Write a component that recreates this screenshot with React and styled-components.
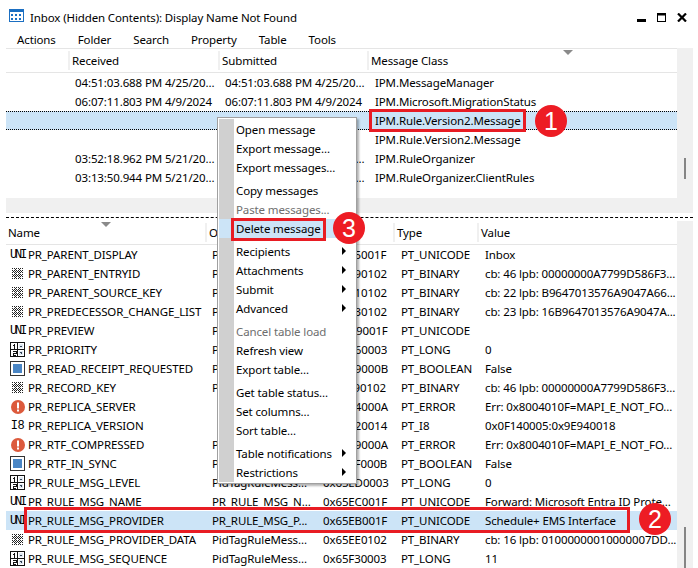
import styled, { createGlobalStyle } from "styled-components"

const GlobalStyle = createGlobalStyle`
  html, body { margin: 0; padding: 0; background: #fff; }
  body { font-family: "Noto Sans", "Open Sans", "Liberation Sans", sans-serif; font-size: 11.5px; letter-spacing: -0.12px; color: #000; }
`
const Window = styled.div`
  position: relative;
  width: 698px;
  height: 568px;
  overflow: hidden;
  background: #fff;
`
const TitleBar = styled.div`
  height: 30px;
  display: flex;
  align-items: center;
  padding: 0 11px 0 9px;
  gap: 6px;
`
const TitleText = styled.div`
  flex: 1;
  padding-top: 5px;
`
const WinButtons = styled.div`
  display: flex;
  gap: 11px;
  align-items: center;
  padding-top: 4px;
`
const MenuBar = styled.div`
  height: 18px;
  display: flex;
  align-items: center;
  padding-left: 17px;
  gap: 22px;
`
const Pane = styled.div`
  display: flex;
  margin: 0 5px 0 6px;
  height: ${p => p.$h}px;
`
const ListArea = styled.div`
  width: 671px;
  flex: none;
  overflow: hidden;
`
const ScrollTrack = styled.div`
  width: 16px;
  background: #f0f0f0;
  position: relative;
`
const ScrollThumb = styled.div`
  position: absolute;
  left: 7px;
  width: 2px;
  top: ${p => p.$top}px;
  height: ${p => p.$h}px;
  background: #858585;
`
const HeaderRow = styled.div`
  position: relative;
  display: grid;
  grid-template-columns: ${p => p.$cols};
  height: 23px;
  border-bottom: 1px solid #e5e5e5;
  border-top: ${p => (p.$top ? "1px solid #e5e5e5" : "none")};
`
const HeaderCell = styled.div`
  display: flex;
  align-items: center;
  white-space: nowrap;
  overflow: hidden;
  margin: 2px 0;
  padding-left: 2px;
  border-left: ${p => (p.$first ? "none" : "2px solid #f0f0f0")};
`
const SortCaret = styled.div`
  position: absolute;
  top: 1px;
  left: ${p => p.$left}px;
  width: 0;
  height: 0;
  border-left: 5px solid transparent;
  border-right: 5px solid transparent;
  border-top: 5px solid #8a8a8a;
`
const Row = styled.div`
  display: grid;
  grid-template-columns: ${p => p.$cols};
  height: 19px;
  align-items: center;
  box-sizing: border-box;
  background: ${p => (p.$sel ? "#cce4f7" : "transparent")};
  border-top: ${p => (p.$dotted ? "1px dotted #000" : "none")};
  border-bottom: ${p => (p.$dotted ? "1px dotted #000" : "none")};
`
const Cell = styled.div`
  white-space: nowrap;
  overflow: hidden;
  padding-left: ${p => p.$pad ?? 7}px;
  min-width: 0;
`
const NameCell = styled.div`
  display: flex;
  align-items: center;
  white-space: nowrap;
  overflow: hidden;
  padding-left: 4px;
  gap: 3px;
`
const IconBox = styled.span`
  width: 15px;
  height: 15px;
  flex: none;
  display: flex;
  align-items: center;
  justify-content: center;
`
const TypeGlyph = styled.span`
  font-family: "Liberation Mono", monospace;
  font-size: 12px;
  letter-spacing: ${p => (p.$tight ? "-2.2px" : "-0.4px")};
  line-height: 1;
`
const Splitter = styled.div`
  height: 15px;
  margin: 0 5px 0 6px;
  background: #f0f0f0;
`
const DashLine = styled.div`
  height: 8px;
  margin: 0 5px 0 6px;
  box-sizing: border-box;
  padding-top: 4px;
  &::before {
    content: "";
    display: block;
    border-top: 1px dashed #000;
  }
`
const ContextMenu = styled.div`
  position: absolute;
  left: 217px;
  top: 117px;
  width: 140px;
  height: 367px;
  box-sizing: border-box;
  background: #fff;
  border: 1px solid #a0a0a0;
  box-shadow: 2px 2px 2px rgba(0, 0, 0, 0.3);
  padding: 2px 1px;
  &::before {
    content: "";
    position: absolute;
    left: 1px;
    top: 1px;
    bottom: 1px;
    width: 15px;
    background: #d0d0d0;
  }
`
const MenuItem = styled.div`
  position: relative;
  height: 19px;
  display: flex;
  align-items: center;
  padding-left: 17px;
  color: ${p => (p.$off ? "#6d6d6d" : "#000")};
  background: ${p => (p.$hot ? "#cce4f7" : "transparent")};
  margin-top: ${p => (p.$gap ? 4 : 0)}px;
`
const SubArrow = styled.span`
  position: absolute;
  right: 9px;
  top: 5px;
  width: 0;
  height: 0;
  border-top: 4px solid transparent;
  border-bottom: 4px solid transparent;
  border-left: 4px solid #000;
`
const RedBox = styled.div`
  position: absolute;
  box-sizing: border-box;
  border: 3px solid #e81c23;
  left: ${p => p.$x}px;
  top: ${p => p.$y}px;
  width: ${p => p.$w}px;
  height: ${p => p.$h}px;
`
const Badge = styled.div`
  position: absolute;
  width: 32px;
  height: 32px;
  border-radius: 50%;
  background: #ed1c24;
  color: #fff;
  font-family: "Liberation Sans", sans-serif;
  font-size: 25px;
  letter-spacing: 0;
  display: flex;
  align-items: center;
  justify-content: center;
  left: ${p => p.$x}px;
  top: ${p => p.$y}px;
`

const AppIcon = () => (
  <svg width="15" height="13" viewBox="0 0 15 13">
    <rect x="0.5" y="0.5" width="14" height="12" fill="#fff" stroke="#1b6fc2" />
    <rect x="1" y="1" width="13" height="2" fill="#1b6fc2" />
    {[3, 7, 11].map(x => [5, 9].map(y => <rect key={x + "-" + y} x={x - 1} y={y} width="2" height="2" fill="#1b6fc2" />))}
  </svg>
)
const MinIcon = () => (
  <svg width="9" height="9" viewBox="0 0 9 9"><rect x="0" y="6" width="9" height="3" fill="#000" /></svg>
)
const MaxIcon = () => (
  <svg width="9" height="9" viewBox="0 0 9 9"><rect x="0.5" y="1" width="8" height="7.5" fill="none" stroke="#000" /><rect x="0" y="0" width="9" height="2.5" fill="#000" /></svg>
)
const CloseIcon = () => (
  <svg width="10" height="9" viewBox="0 0 10 9"><path d="M1 0.5 L9 8.5 M9 0.5 L1 8.5" stroke="#000" strokeWidth="2.2" /></svg>
)
const BinIcon = () => (
  <svg width="11" height="11" viewBox="0 0 11 11" shapeRendering="crispEdges">
    {Array.from({ length: 121 }).map((_, i) => {
      const x = i % 11, y = Math.floor(i / 11)
      const on = (x + y) % 2 === 0 && !(x % 4 === 1 && y % 4 === 1)
      return on ? <rect key={i} x={x} y={y} width="1" height="1" fill="#222" /> : null
    })}
  </svg>
)
const NumIcon = () => (
  <svg width="15" height="15" viewBox="0 0 15 15" shapeRendering="crispEdges">
    <rect x="0.5" y="0.5" width="14" height="14" fill="#fff" stroke="#111" />
    <path d="M7.5 0 V15 M0 7.5 H15" stroke="#111" />
    <path d="M3 3 H4 M4.5 2 V7 M3 9.5 H6 V11.5 H3 V13.5 H6" stroke="#111" fill="none" />
    <rect x="9" y="2" width="4" height="4" fill="#dfe8f2" />
    <rect x="9" y="9" width="4" height="4" fill="#dfe8f2" />
    <path d="M10 4.5 H12 M11 3.5 V4 M10 10.5 H12 M11 11 V11.5" stroke="#345" />
  </svg>
)
const BoolIcon = () => (
  <svg width="15" height="15" viewBox="0 0 15 15" shapeRendering="crispEdges">
    <rect x="0.5" y="0.5" width="14" height="14" fill="#fff" stroke="#333" />
    <rect x="3" y="3" width="9" height="9" fill="#4a86c5" />
  </svg>
)
const ErrIcon = () => (
  <svg width="14" height="14" viewBox="0 0 14 14">
    <circle cx="7" cy="7" r="7" fill="#dc5a3c" />
    <rect x="6" y="2.5" width="2" height="6" fill="#fff" />
    <rect x="6" y="9.5" width="2" height="2" fill="#fff" />
  </svg>
)

const typeIcon = kind => {
  if (kind === "uni") return <TypeGlyph $tight>UNI</TypeGlyph>
  if (kind === "bin") return <BinIcon />
  if (kind === "num") return <NumIcon />
  if (kind === "bool") return <BoolIcon />
  if (kind === "err") return <ErrIcon />
  return <TypeGlyph>I8</TypeGlyph>
}

const TOP_COLS = "62px 150px 149px 310px"
const BOTTOM_COLS = "199px 110px 78px 84px 200px"

const topRows = [
  ["04:51:03.688 PM 4/25/20...", "04:51:03.688 PM 4/25/20...", "IPM.MessageManager"],
  ["06:07:11.803 PM 4/9/2024", "06:07:11.803 PM 4/9/2024", "IPM.Microsoft.MigrationStatus"],
  ["", "", "IPM.Rule.Version2.Message", true],
  ["", "", "IPM.Rule.Version2.Message"],
  ["03:52:18.962 PM 5/21/20...", "03:52:18.962 PM 5/21/20...", "IPM.RuleOrganizer"],
  ["03:13:50.944 PM 5/21/20...", "03:13:50.944 PM 5/21/20...", "IPM.RuleOrganizer.ClientRules"],
]

const props = [
  ["uni", "PR_PARENT_DISPLAY", "PR_PARENT_DISP...", "0x0E05001F", "PT_UNICODE", "Inbox"],
  ["bin", "PR_PARENT_ENTRYID", "PR_PARENT_ENTR...", "0x0E090102", "PT_BINARY", "cb: 46 lpb: 00000000A7799D586F3..."],
  ["bin", "PR_PARENT_SOURCE_KEY", "PR_PARENT_SOUR...", "0x65E10102", "PT_BINARY", "cb: 22 lpb: B9647013576A9047A66..."],
  ["bin", "PR_PREDECESSOR_CHANGE_LIST", "PR_PREDECESSOR...", "0x65E30102", "PT_BINARY", "cb: 23 lpb: 16B9647013576A9047A..."],
  ["uni", "PR_PREVIEW", "PR_PREVIEW", "0x3FD9001F", "PT_UNICODE", ""],
  ["num", "PR_PRIORITY", "PR_PRIORITY", "0x00260003", "PT_LONG", "0"],
  ["bool", "PR_READ_RECEIPT_REQUESTED", "PR_READ_RECEIP...", "0x0029000B", "PT_BOOLEAN", "False"],
  ["bin", "PR_RECORD_KEY", "PR_RECORD_KEY", "0x0FF90102", "PT_BINARY", "cb: 46 lpb: 00000000A7799D586F3..."],
  ["err", "PR_REPLICA_SERVER", "", "0x6644000A", "PT_ERROR", "Err: 0x8004010F=MAPI_E_NOT_FO..."],
  ["i8", "PR_REPLICA_VERSION", "", "0x66420014", "PT_I8", "0x0F140005:0x9E940018"],
  ["err", "PR_RTF_COMPRESSED", "PR_RTF_COMPRES...", "0x1009000A", "PT_ERROR", "Err: 0x8004010F=MAPI_E_NOT_FO..."],
  ["bool", "PR_RTF_IN_SYNC", "PR_RTF_IN_SYNC", "0x0E1F000B", "PT_BOOLEAN", "False"],
  ["num", "PR_RULE_MSG_LEVEL", "PidTagRuleMess...", "0x65ED0003", "PT_LONG", "0"],
  ["uni", "PR_RULE_MSG_NAME", "PR_RULE_MSG_N...", "0x65EC001F", "PT_UNICODE", "Forward: Microsoft Entra ID Prote..."],
  ["uni", "PR_RULE_MSG_PROVIDER", "PR_RULE_MSG_P...", "0x65EB001F", "PT_UNICODE", "Schedule+ EMS Interface", true],
  ["bin", "PR_RULE_MSG_PROVIDER_DATA", "PidTagRuleMess...", "0x65EE0102", "PT_BINARY", "cb: 16 lpb: 01000000010000007DD..."],
  ["num", "PR_RULE_MSG_SEQUENCE", "PidTagRuleMess...", "0x65F30003", "PT_LONG", "11"],
]

const menuItems = [
  { label: "Open message" },
  { label: "Export message..." },
  { label: "Export messages..." },
  { label: "Copy messages", gap: true },
  { label: "Paste messages...", off: true },
  { label: "Delete message", hot: true },
  { label: "Recipients", gap: true, sub: true },
  { label: "Attachments", sub: true },
  { label: "Submit", sub: true },
  { label: "Advanced", sub: true },
  { label: "Cancel table load", gap: true, off: true },
  { label: "Refresh view" },
  { label: "Export table..." },
  { label: "Get table status...", gap: true },
  { label: "Set columns..." },
  { label: "Sort table..." },
  { label: "Table notifications", gap: true, sub: true },
  { label: "Restrictions", sub: true },
]

export default function App() {
  return (
    <Window>
      <GlobalStyle />
      <TitleBar>
        <AppIcon />
        <TitleText>Inbox (Hidden Contents): Display Name Not Found</TitleText>
        <WinButtons>
          <MinIcon />
          <MaxIcon />
          <CloseIcon />
        </WinButtons>
      </TitleBar>
      <MenuBar>
        {["Actions", "Folder", "Search", "Property", "Table", "Tools"].map(m => <span key={m}>{m}</span>)}
      </MenuBar>
      <Pane $h={150}>
        <ListArea>
          <HeaderRow $cols={TOP_COLS} $top>
            <HeaderCell $first />
            <HeaderCell>Received</HeaderCell>
            <HeaderCell>Submitted</HeaderCell>
            <HeaderCell>Message Class</HeaderCell>
            <SortCaret $left={557} />
          </HeaderRow>
          {topRows.map((r, i) => (
            <Row key={i} $cols={TOP_COLS} $sel={r[3]} $dotted={r[3]}>
              <Cell />
              <Cell>{r[0]}</Cell>
              <Cell>{r[1]}</Cell>
              <Cell $pad={8}>{r[2]}</Cell>
            </Row>
          ))}
        </ListArea>
        <ScrollTrack><ScrollThumb $top={110} $h={21} /></ScrollTrack>
      </Pane>
      <Splitter />
      <DashLine />
      <Pane $h={347}>
        <ListArea>
          <HeaderRow $cols={BOTTOM_COLS}>
            <HeaderCell $first>Name</HeaderCell>
            <HeaderCell>Other Names</HeaderCell>
            <HeaderCell>Tag</HeaderCell>
            <HeaderCell>Type</HeaderCell>
            <HeaderCell>Value</HeaderCell>
            <SortCaret $left={95} />
          </HeaderRow>
          {props.map(p => (
            <Row key={p[1]} $cols={BOTTOM_COLS} $sel={p[6]}>
              <NameCell>
                <IconBox>{typeIcon(p[0])}</IconBox>
                {p[1]}
              </NameCell>
              <Cell>{p[2]}</Cell>
              <Cell $pad={8}>{p[3]}</Cell>
              <Cell $pad={8}>{p[4]}</Cell>
              <Cell $pad={8}>{p[5]}</Cell>
            </Row>
          ))}
        </ListArea>
        <ScrollTrack><ScrollThumb $top={306} $h={41} /></ScrollTrack>
      </Pane>

      <ContextMenu>
        {menuItems.map(it => (
          <MenuItem key={it.label} $gap={it.gap} $off={it.off} $hot={it.hot}>
            {it.label}
            {it.sub && <SubArrow />}
          </MenuItem>
        ))}
      </ContextMenu>

      <RedBox $x={369} $y={109} $w={157} $h={23} />
      <RedBox $x={24} $y={507} $w={606} $h={26} />
      <RedBox $x={231} $y={218} $w={95} $h={23} />
      <Badge $x={535} $y={105}>1</Badge>
      <Badge $x={639} $y={503}>2</Badge>
      <Badge $x={333} $y={212}>3</Badge>
    </Window>
  )
}
